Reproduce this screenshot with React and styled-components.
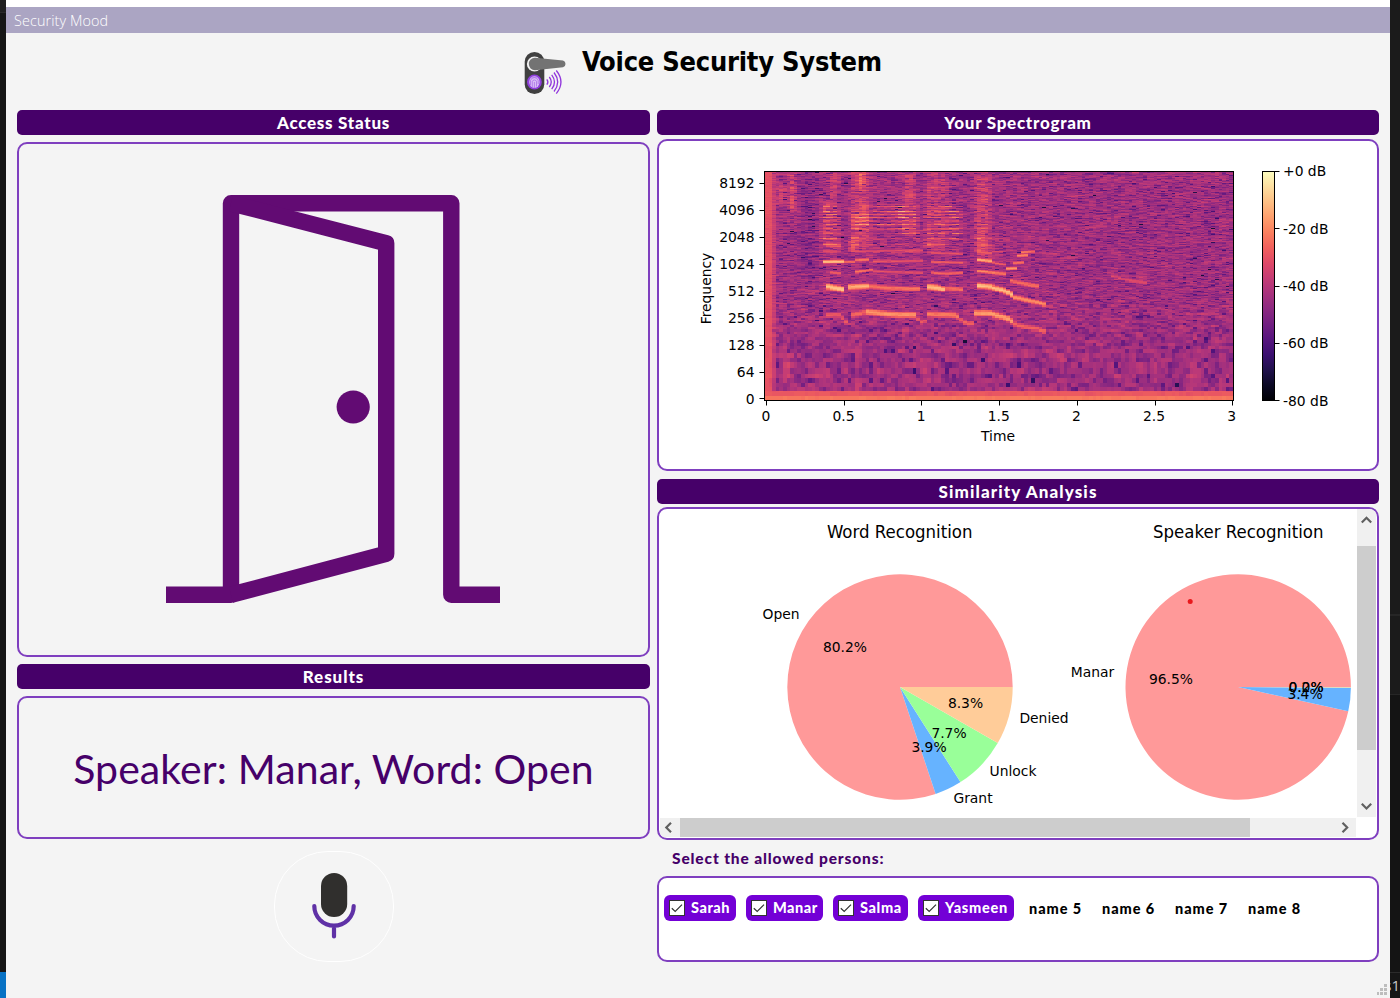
import React, { useMemo } from "react";
import styled, { createGlobalStyle } from "styled-components";

const GlobalStyle = createGlobalStyle`
  * { box-sizing: border-box; }
  body { margin: 0; background: #161616; overflow: hidden; }
`;

const futura = `Lato, "Liberation Sans", sans-serif`;
const plum = "#460069";
const violet = "#7f3fbf";

const Screen = styled.div`
  display: flex;
  width: 1400px;
  height: 998px;
  background: #161616;
`;
const LeftEdge = styled.div`
  width: 6px;
  background: linear-gradient(#1f1f1f 0 12px, #2a2a2a 12px 13px, #161616 13px 972px, #0872c4 972px);
`;
const RightEdge = styled.div`
  width: 10px;
  display: flex;
  flex-direction: column;
  justify-content: flex-end;
  overflow: hidden;
  background: linear-gradient(#1b1b1b 0 614px, #262626 614px 616px, #1b1b1b 616px 694px, #262626 694px 695px, #141414 695px 972px, #2b2b2b 972px 973px, #161616 973px);
`;
const EdgeText = styled.div`
  height: 23px;
  direction: rtl;
  white-space: nowrap;
  font: 15px/20px "Open Sans", sans-serif;
  color: #c8c8c8;
`;
const Window = styled.div`
  width: 1384px;
  display: flex;
  flex-direction: column;
  padding-top: 7px;
  background: linear-gradient(#fff 0 7px, #f4f4f4 7px);
`;
const TitleBar = styled.div`
  height: 26px;
  padding-left: 8px;
  background: #aba5c3;
  color: #fff;
  font: 300 14.4px/27px "Open Sans", "Noto Sans", sans-serif;
  letter-spacing: 0.1px;
`;
const Brand = styled.header`
  height: 77px;
  display: flex;
  padding-left: 514px;
  gap: 10px;
`;
const BrandName = styled.h1`
  margin: 10px 0 0;
  font: 700 27px/38px "DejaVu Sans Condensed", "DejaVu Sans", sans-serif;
  font-stretch: condensed;
  letter-spacing: -0.23px;
  white-space: nowrap;
  color: #000;
`;
const Columns = styled.main`
  display: flex;
  gap: 7px;
  padding-left: 11px;
`;
const Column = styled.div`
  width: ${(p) => p.$w}px;
  display: flex;
  flex-direction: column;
`;
const Heading = styled.h2`
  height: 25px;
  margin: ${(p) => p.$top || 0}px 0 0;
  border-radius: 5px;
  background: ${plum};
  color: #fff;
  text-align: center;
  font: 900 17px/26px ${futura};
  letter-spacing: ${(p) => p.$track || 0.72}px;
`;
const Panel = styled.section`
  height: ${(p) => p.$h}px;
  margin-top: ${(p) => p.$top}px;
  border: 2px solid ${violet};
  border-radius: 10px;
  background: ${(p) => (p.$plain ? "transparent" : "#fff")};
  overflow: hidden;
`;
const ResultPanel = styled(Panel)`
  display: flex;
  align-items: center;
  justify-content: center;
  padding-top: 2px;
  color: ${plum};
  font: 400 41px/50px ${futura};
  letter-spacing: 0.08px;
  white-space: nowrap;
`;
const MicButton = styled.button`
  width: 120px;
  height: 111px;
  margin: 12px 0 0;
  align-self: center;
  padding: 0;
  border: 1px solid #fff;
  border-radius: 54px;
  background: transparent;
`;
const ScrollPanel = styled(Panel)`
  display: grid;
  grid-template-columns: 698px 20px;
  grid-template-rows: 309px 20px;
`;
const VBar = styled.div`
  width: 19px;
  height: 308px;
  background: #f0f0f0;
  display: flex;
  flex-direction: column;
  justify-content: space-between;
`;
const VThumb = styled.div`
  height: 204px;
  margin-bottom: 30px;
  background: #cdcdcd;
`;
const HBar = styled.div`
  width: 696px;
  height: 19px;
  margin-left: 1px;
  background: #f0f0f0;
  display: flex;
`;
const HThumb = styled.div`
  width: 570px;
  background: #cdcdcd;
`;
const HSpacer = styled.div`
  width: 86px;
`;
const Arrow = styled.svg`
  display: block;
  flex: none;
  fill: none;
  stroke: #606060;
  stroke-width: 2.2;
`;
const Prompt = styled.div`
  height: 36px;
  padding-left: 15px;
  color: ${plum};
  font: 900 15.5px/37px ${futura};
  letter-spacing: 0.86px;
`;
const People = styled(Panel)`
  display: flex;
  align-items: flex-start;
  padding: 17px 0 0 5px;
`;
const Person = styled.label`
  width: ${(p) => p.$w}px;
  height: 26px;
  margin-right: 10px;
  padding-left: 5px;
  display: flex;
  align-items: center;
  gap: 6px;
  border-radius: 6px;
  background: #7300d6;
  color: #fff;
  font: 900 14.5px/28px ${futura};
  letter-spacing: ${(p) => p.$track}px;
  white-space: nowrap;
`;
const Box = styled.svg`
  display: block;
  flex: none;
`;
const Slot = styled.span`
  width: 73px;
  padding-left: 5px;
  font: 900 14.5px/28px ${futura};
  letter-spacing: 0.95px;
  white-space: nowrap;
`;
const Grip = styled.svg`
  display: block;
  margin: 22px 3px 0 auto;
`;
const Chart = styled.svg`
  display: block;
  font-family: "DejaVu Sans", sans-serif;
  font-size: 13.89px;
`;

/* ---------- spectrogram ---------- */
const magma = [
  [0, 0, 4], [11, 9, 36], [32, 17, 75], [59, 15, 112], [87, 21, 126], [114, 31, 129],
  [140, 41, 129], [168, 50, 125], [196, 60, 117], [222, 73, 104], [241, 96, 93],
  [250, 127, 94], [254, 159, 109], [254, 191, 132], [253, 222, 160], [252, 253, 191],
];
const magmaColor = (t) => {
  const p = Math.max(0, Math.min(0.9999, t)) * 15;
  const i = Math.floor(p);
  const c = magma[i].map((v, k) => Math.round(v + (magma[i + 1][k] - v) * (p - i)));
  return `rgb(${c.join(",")})`;
};

// Voice harmonics: [level in dB, x1, y1, x2, y2, ...] in thirds of a pixel.
const ridges = [
  [-17, 525, 487, 555, 490, 600, 495, 680, 497],
  [-28, 408, 497, 450, 497, 470, 520],
  [-25, 485, 497, 525, 489],
  [-28, 680, 503, 690, 519, 705, 517, 715, 500],
  [-21, 710, 494, 790, 497, 810, 503],
  [-27, 805, 506, 830, 523, 855, 522],
  [-16, 852, 491, 900, 492, 950, 506, 965, 515],
  [-26, 960, 515, 980, 528, 1040, 538, 1065, 546],
  [-9, 405, 410, 458, 420],
  [-13, 475, 413, 540, 410],
  [-23, 540, 411, 600, 416, 685, 418],
  [-10, 708, 412, 735, 414, 765, 420],
  [-24, 765, 416, 815, 420],
  [-11, 858, 408, 900, 412, 950, 426, 975, 441],
  [-19, 970, 442, 1000, 449, 1040, 458, 1070, 466],
  [-28, 415, 368, 455, 372],
  [-23, 490, 369, 545, 361],
  [-30, 545, 366, 700, 370],
  [-26, 720, 369, 765, 373, 815, 370],
  [-21, 865, 365, 950, 374],
  [-24, 955, 392, 990, 401, 1045, 411],
  [-11, 395, 337, 458, 336],
  [-25, 458, 337, 490, 337],
  [-23, 490, 332, 540, 330],
  [-29, 545, 336, 700, 334],
  [-27, 725, 337, 820, 340],
  [-14, 865, 331, 905, 335],
  [-27, 905, 338, 950, 347],
  [-18, 950, 357, 980, 356],
  [-23, 965, 341, 1003, 339],
  [-20, 978, 319, 1010, 317],
  [-23, 990, 309, 1035, 306],
  [-31, 1262, 379, 1300, 389, 1368, 400],
  [-24, 483, 265, 505, 265],
  [-30, 490, 306, 700, 302],
  [-30, 720, 310, 815, 313],
  [-27, 410, 290, 455, 290],
  [-26, 860, 308, 910, 312],
];
// Energy bursts: [x1, x2, y1, y2, gain, how strongly they follow the harmonics]
const bursts = [
  [243, 310, 66, 82, 9, 0],
  [250, 290, 90, 170, 8, 0],
  [290, 325, 60, 200, 11, 0],
  [388, 456, 150, 320, 14, 0.7],
  [390, 425, 155, 190, 9, 0],
  [410, 455, 50, 170, 7, 0],
  [398, 422, 375, 450, 10, 0],
  [475, 550, 50, 320, 9, 0.4],
  [498, 530, 40, 130, 13, 0],
  [480, 550, 185, 250, 15, 0.6],
  [470, 510, 250, 315, 12, 0],
  [500, 545, 145, 205, 9, 0.4],
  [540, 645, 150, 255, 12, 1],
  [540, 700, 245, 345, 5, 1],
  [625, 690, 150, 266, 16, 0.7],
  [635, 685, 50, 170, 8, 0.2],
  [625, 650, 445, 490, 10, 0],
  [700, 778, 50, 170, 8, 0.3],
  [700, 775, 150, 320, 13, 0.6],
  [760, 822, 145, 290, 13, 1],
  [848, 908, 50, 340, 11, 0.4],
  [855, 890, 230, 320, 7, 0],
  [890, 950, 240, 340, 5, 1],
  [1255, 1375, 370, 405, 6, 0],
  [1200, 1300, 180, 240, 2, 0],
  [275, 305, 570, 710, 6, 0],
  [490, 520, 540, 740, 6, 0],
  [320, 392, 60, 400, -3, 0],
  [456, 474, 60, 400, -3, 0],
  [820, 848, 60, 400, -2, 0],
];

const edge = (v, a, b, soft) => Math.min(1, Math.min(v - a, b - v) / soft);
const yOf = (f) => (f < 64 ? 399 - (f / 64) * 27 : 372 - 27 * Math.log2(f / 64));

function buildSpectrogram() {
  const cols = 130;
  const w = 468 / cols;
  const rows = 229;
  let seed = 90217;
  const rnd = () => {
    seed = (seed * 1664525 + 1013904223) >>> 0;
    return (seed + 1) / 4294967297;
  };
  const gauss = () => Math.sqrt(-2 * Math.log(rnd())) * Math.cos(6.28318 * rnd());
  const cells = {};
  const noise = new Map();
  const strip = (bin) => {
    if (!noise.has(bin)) {
      const a = Array.from({ length: cols + 4 }, gauss);
      const b = Array.from({ length: cols + 4 }, gauss);
      const mix = (s, c) => (0.45 * s[c] + s[c + 1] + 0.45 * s[c + 2]) / 1.185;
      noise.set(bin, Array.from({ length: cols }, (_, c) =>
        10 * Math.log10((mix(a, c) ** 2 + mix(b, c) ** 2) / 2 + 0.0003)));
    }
    return noise.get(bin);
  };
  const binHz = 22050 / 2048;
  for (let r = 0; r < rows; r++) {
    const y = 171.5 + r + 0.5;
    const f = y > 372 ? Math.max(0, ((399 - y) / 27) * 64) : 64 * 2 ** ((372 - y) / 27);
    const bin = Math.round(f / binHz);
    // Every pixel row of one FFT bin shares the height of that bin's centre.
    const zy = (yOf(bin * binHz) - 150) * 3;
    const n = strip(bin);
    const harmonic = Math.max(0, Math.cos((6.28318 * f) / 277)) ** 2;
    let runStart = 0;
    let last = -1;
    for (let c = 0; c <= cols; c++) {
      let q = -2;
      if (c < cols) {
        const zx = 225 + (c + 0.5) * w * 3;
        let db = -42.3 + Math.max(-38, n[c] * 0.88);
        if (f < 240) db -= 0.6;
        if (zx > 1050 && f > 400) db -= 0.4;
        for (const [x1, x2, y1, y2, g, h] of bursts) {
          if (zx > x1 && zx < x2 && zy > y1 && zy < y2) {
            db += g * (1 - h + h * 1.5 * harmonic) * edge(zx, x1, x2, 16) * edge(zy, y1, y2, 24);
          }
        }
        if (c < 2) db = -30 + n[c] * 0.12;
        if (c === 2) db = Math.max(db, -36 + n[c] * 0.4);
        for (const rd of ridges) {
          for (let k = 1; k + 3 < rd.length; k += 2) {
            const [x1, y1, x2, y2] = [rd[k], rd[k + 1], rd[k + 2], rd[k + 3]];
            if (zx < x1 || zx > x2) continue;
            const ry = y1 + ((y2 - y1) * (zx - x1)) / (x2 - x1);
            const reach = ry > 470 ? 4.6 : ry > 390 ? 3.9 : 2.4;
            const d = Math.abs(zy - ry);
            if (d < reach * 2.6) db = Math.max(db, rd[0] - (d / reach) ** 2 * 4.2 + n[c] * 0.2);
          }
        }
        if (y > 391) db = -28.5 + n[c] * 0.12;
        if (y > 396) db = -22.5 + n[c] * 0.06;
        q = Math.max(0, Math.min(79, Math.round(db + 80)));
      }
      if (q !== last) {
        if (last >= 0) {
          const x0 = Math.round(765 + runStart * w);
          const x1 = Math.round(765 + c * w);
          (cells[last] = cells[last] || []).push(`M${x0} ${171 + r}h${x1 - x0}v1h${x0 - x1}z`);
        }
        runStart = c;
        last = q;
      }
    }
  }
  return Object.entries(cells).map(([q, d]) => ({ fill: magmaColor(q / 80), d: d.join("") }));
}

const freqTicks = ["8192", "4096", "2048", "1024", "512", "256", "128", "64", "0"];
const timeTicks = ["0", "0.5", "1", "1.5", "2", "2.5", "3"];
const dbTicks = ["+0 dB", "-20 dB", "-40 dB", "-60 dB", "-80 dB"];

function Spectrogram() {
  const layers = useMemo(buildSpectrogram, []);
  return (
    <Chart width="718" height="328" viewBox="659 141 718 328">
      <defs>
        <linearGradient id="scale" x1="0" y1="1" x2="0" y2="0">
          {magma.map((c, i) => (
            <stop key={i} offset={i / 15} stopColor={`rgb(${c.join(",")})`} />
          ))}
        </linearGradient>
      </defs>
      <g shapeRendering="crispEdges">
        {layers.map((l) => <path key={l.fill} d={l.d} fill={l.fill} />)}
      </g>
      <rect x="764.5" y="171.5" width="469" height="229" fill="none" stroke="#000" />
      {freqTicks.map((t, i) => (
        <g key={t}>
          <path d={`M759.5 ${Math.min(398.5, 183.5 + i * 27)}h5`} stroke="#000" />
          <text x="754.5" y={188 + i * 26.95} textAnchor="end">{t}</text>
        </g>
      ))}
      {timeTicks.map((t, i) => (
        <g key={t}>
          <path d={`M${Math.round(766 + i * 77.7) + 0.5} 401v4.5`} stroke="#000" />
          <text x={766 + i * 77.6} y="421" textAnchor="middle">{t}</text>
        </g>
      ))}
      <text x="998" y="441" textAnchor="middle">Time</text>
      <text transform="translate(711 288.5) rotate(-90)" textAnchor="middle">Frequency</text>
      <rect x="1262.5" y="171.5" width="12" height="229" fill="url(#scale)" stroke="#000" />
      {dbTicks.map((t, i) => (
        <g key={t}>
          <path d={`M1275 ${Math.round(171 + i * 57.3) + 0.5}h4.5`} stroke="#000" />
          <text x="1283" y={176.2 + i * 57.4}>{t}</text>
        </g>
      ))}
    </Chart>
  );
}

/* ---------- pies ---------- */
const sliceColors = ["#ff9999", "#66b3ff", "#99ff99", "#ffcc99"];

function Pie({ cx, cy, values }) {
  const r = 112.7;
  const total = values.reduce((a, b) => a + b, 0);
  let at = 0;
  return values.map((v, i) => {
    const a0 = (at / total) * 2 * Math.PI;
    at += v;
    const a1 = (at / total) * 2 * Math.PI;
    const d = `M${cx} ${cy}L${cx + r * Math.cos(a0)} ${cy - r * Math.sin(a0)}A${r} ${r} 0 ${a1 - a0 > Math.PI ? 1 : 0} 0 ${cx + r * Math.cos(a1)} ${cy - r * Math.sin(a1)}Z`;
    return <path key={i} d={d} fill={sliceColors[i]} />;
  });
}

const pieLabels = [
  ["Open", 781, 619], ["80.2%", 845, 652], ["8.3%", 965.5, 708], ["7.7%", 949, 738],
  ["3.9%", 929, 752], ["Denied", 1044, 723], ["Unlock", 1013, 776], ["Grant", 973, 803],
  ["Manar", 1092.5, 677], ["96.5%", 1171, 684], ["3.4%", 1305, 699],
  ["0.0%", 1306, 692], ["0.2%", 1306, 692],
];

function Pies() {
  return (
    <Chart width="698" height="309" viewBox="659 509 698 309">
      <Pie cx={900} cy={687} values={[80.2, 3.9, 7.7, 8.3]} />
      <Pie cx={1238.2} cy={687} values={[96.55, 3.35, 0.02, 0.08]} />
      <circle cx="1190.2" cy="601.5" r="2.5" fill="#e8191c" />
      <text transform="translate(899.7 538) scale(1 1.06)" fontSize="16.6" textAnchor="middle">Word Recognition</text>
      <text transform="translate(1238.2 538) scale(1 1.06)" fontSize="16.6" textAnchor="middle">Speaker Recognition</text>
      {pieLabels.map(([t, x, y]) => (
        <text key={t} x={x} y={y} textAnchor="middle">{t}</text>
      ))}
    </Chart>
  );
}

/* ---------- drawings ---------- */
const Logo = () => (
  <svg width="52" height="70" viewBox="520 33 52 70">
    <rect x="524.7" y="52" width="19.6" height="42" rx="9.8" fill="#404040" />
    <circle cx="534.5" cy="64" r="7.6" fill="#f4f4f4" />
    <path d="M535 57.8L563 60.6Q565.5 61.2 565.5 64Q565.5 66.7 563 67.3L535 70.2A6.2 6.2 0 0 1 535 57.8Z" fill="#737373" />
    <circle cx="534.4" cy="82" r="7.4" fill="#8f3fdd" />
    <ellipse cx="534.4" cy="82" rx="5.2" ry="6.1" fill="#d9bdf5" />
    <g fill="none" stroke="#9b55e2" strokeWidth=".6">
      <path d="M530.5 85V80.5A4 4 0 0 1 538.2 80.5V84" />
      <path d="M532.3 87V81.5A2.2 2.2 0 0 1 536.5 81.5V86.5" />
      <path d="M534.4 82V88M531.5 77L537.5 77" />
    </g>
    <g fill="none" stroke="#9136dc" strokeWidth="1.3">
      <path d="M546.8 79.3Q549 82 546.8 84.7" />
      <path d="M549.3 77Q553.2 82 549.3 87" />
      <path d="M551.7 74.8Q557.3 82 551.7 89.2" />
      <path d="M554 72.5Q561.4 82 554 91.5" />
      <path d="M556.3 70.5Q565.6 82 556.3 93.6" />
    </g>
  </svg>
);

const Door = () => (
  <svg width="629" height="511" viewBox="19 144 629 511">
    <g fill="none" stroke="#620b73" strokeWidth="16.4" strokeLinejoin="round">
      <path d="M166 594.8H231V203.2H451.3V594.8H500" />
      <path d="M231 203.2L386.2 243.2V553.8L231 594.8" />
    </g>
    <circle cx="353.2" cy="407" r="16.6" fill="#620b73" />
  </svg>
);

const Mic = () => (
  <svg width="118" height="109" viewBox="275 852 118 109" display="block">
    <rect x="321" y="873" width="26.2" height="44" rx="13.1" fill="#302f2d" />
    <path d="M314.3 906A19.6 19.6 0 0 0 353.7 906M334 926V936.5" fill="none" stroke="#5f31a6" strokeWidth="4.2" strokeLinecap="round" />
  </svg>
);

const Checkbox = () => (
  <Box width="16" height="16" viewBox="0 0 16 16">
    <rect x=".5" y=".5" width="15" height="15" fill="#fff" stroke="#333" />
    <path d="M2.8 8.2L6.2 11.5L13 4.7" fill="none" stroke="#333" strokeWidth="1.2" />
  </Box>
);

export default function App() {
  return (
    <Screen>
      <GlobalStyle />
      <LeftEdge />
      <Window>
        <TitleBar>Security Mood</TitleBar>
        <Brand>
          <Logo />
          <BrandName>Voice Security System</BrandName>
        </Brand>
        <Columns>
          <Column $w={633}>
            <Heading>Access Status</Heading>
            <Panel $h={515} $top={7} $plain><Door /></Panel>
            <Heading $top={7} $track={0.95}>Results</Heading>
            <ResultPanel $h={143} $top={7} $plain>Speaker: Manar, Word: Open</ResultPanel>
            <MicButton aria-label="Record"><Mic /></MicButton>
          </Column>
          <Column $w={722}>
            <Heading>Your Spectrogram</Heading>
            <Panel $h={332} $top={4}><Spectrogram /></Panel>
            <Heading $top={8} $track={1.12}>Similarity Analysis</Heading>
            <ScrollPanel $h={333} $top={3}>
              <Pies />
              <VBar>
                <Arrow width="19" height="22" viewBox="0 0 19 22"><path d="M4.8 13.5L9.5 8.8L14.2 13.5" /></Arrow>
                <VThumb />
                <Arrow width="19" height="22" viewBox="0 0 19 22"><path d="M4.8 8.8L9.5 13.5L14.2 8.8" /></Arrow>
              </VBar>
              <HBar>
                <Arrow width="20" height="19" viewBox="0 0 20 19"><path d="M11 4.8L6.3 9.5L11 14.2" /></Arrow>
                <HThumb />
                <HSpacer />
                <Arrow width="20" height="19" viewBox="0 0 20 19"><path d="M6.5 4.8L11.2 9.5L6.5 14.2" /></Arrow>
              </HBar>
            </ScrollPanel>
            <Prompt>Select the allowed persons:</Prompt>
            <People $h={86} $top={0}>
              <Person $w={72} $track={0.55}><Checkbox />Sarah</Person>
              <Person $w={77} $track={0.5}><Checkbox />Manar</Person>
              <Person $w={75} $track={0.65}><Checkbox />Salma</Person>
              <Person $w={96} $track={0.75}><Checkbox />Yasmeen</Person>
              <Slot>name 5</Slot>
              <Slot>name 6</Slot>
              <Slot>name 7</Slot>
              <Slot>name 8</Slot>
            </People>
          </Column>
        </Columns>
        <Grip width="10" height="12" viewBox="0 0 10 12" fill="#bdbdbd">
          <path d="M7 0h3v3h-3zM7 4h3v3h-3zM3 4h3v3h-3zM7 8h3v3h-3zM3 8h3v3h-3zM0 8h2v3h-2z" />
        </Grip>
      </Window>
      <RightEdge><EdgeText>s1</EdgeText></RightEdge>
    </Screen>
  );
}
